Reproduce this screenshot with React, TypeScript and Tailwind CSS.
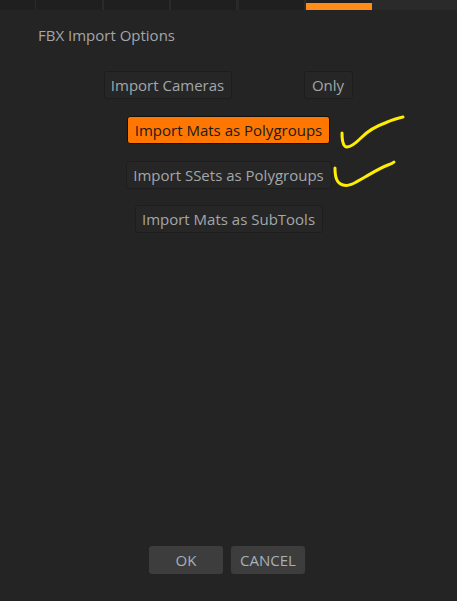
import React from "react";

const font = { fontFamily: '"Open Sans", "Noto Sans", sans-serif' };

function GrayBtn({ children, className = "" }: { children: React.ReactNode; className?: string }) {
  return (
    <div
      className={`h-[28px] flex items-center justify-center rounded-[3px] border border-[#1d1d1d] bg-[#262626] text-[#a3a6aa] text-[15px] ${className}`}
    >
      {children}
    </div>
  );
}

export default function App() {
  return (
    <div className="relative w-[457px] h-[601px] bg-[#242424] flex flex-col overflow-hidden" style={font}>
      {/* top tab strip */}
      <div className="h-[10px] flex bg-[#2a2a2a]">
        <div className="w-[35px] h-[10px] bg-[#1f1f1f]" />
        <div className="w-[66px] ml-[1px] h-[10px] bg-[#1f1f1f]" />
        <div className="w-[65px] ml-[2px] h-[10px] bg-[#1f1f1f]" />
        <div className="w-[65px] ml-[2px] h-[10px] bg-[#1f1f1f]" />
        <div className="w-[65px] ml-[3px] h-[10px] bg-[#1f1f1f]" />
        <div className="w-[66px] ml-[2px] h-[10px] bg-[#1f1f1f] flex flex-col">
          <div className="h-[3px]" />
          <div className="h-[7px] bg-[#ff8c1a]" />
        </div>
      </div>

      <div className="pl-[38px] mt-[15px] text-[15px] leading-[20px] text-[#a3a6aa]">FBX Import Options</div>

      <div className="mt-[26px] flex justify-center gap-[72px] pr-[1px]">
        <GrayBtn className="w-[128px]">Import Cameras</GrayBtn>
        <GrayBtn className="w-[49px]">Only</GrayBtn>
      </div>

      <div className="mt-[17px] flex justify-center">
        <div className="w-[203px] h-[28px] flex items-center justify-center rounded-[3px] border border-[#111] bg-[#ff7700] text-[#1a1a1a] text-[15px]">
          Import Mats as Polygroups
        </div>
      </div>

      <div className="mt-[17px] flex justify-center">
        <GrayBtn className="w-[206px]">Import SSets as Polygroups</GrayBtn>
      </div>

      <div className="mt-[16px] flex justify-center">
        <GrayBtn className="w-[188px]">Import Mats as SubTools</GrayBtn>
      </div>

      <div className="flex-1" />

      <div className="mb-[27px] flex justify-center gap-[8px] pr-[3px]">
        <div className="w-[74px] h-[28px] flex items-center justify-center rounded-[3px] bg-[#3d3d3d] text-[#a8b0b8] text-[15px]">
          OK
        </div>
        <div className="w-[74px] h-[28px] flex items-center justify-center rounded-[3px] bg-[#3d3d3d] text-[#a8b0b8] text-[15px]">
          CANCEL
        </div>
      </div>

      {/* yellow annotation strokes */}
      <svg className="absolute left-0 top-0 pointer-events-none" width="457" height="601">
        <path
          d="M342 133 C342 140 343 147 347 147 C351 147 356 143 362 137 C368 131 374 127 385 123 C392 120 398 118 403 117"
          fill="none"
          stroke="#ffee00"
          strokeWidth="3"
          strokeLinecap="round"
          strokeLinejoin="round"
        />
        <path
          d="M335 168 C335 176 336 183 343 185 C350 187 356 182 365 177 C372 173 380 168 388 165 C391 164 393 163 394 162"
          fill="none"
          stroke="#ffee00"
          strokeWidth="3"
          strokeLinecap="round"
          strokeLinejoin="round"
        />
      </svg>
    </div>
  );
}
